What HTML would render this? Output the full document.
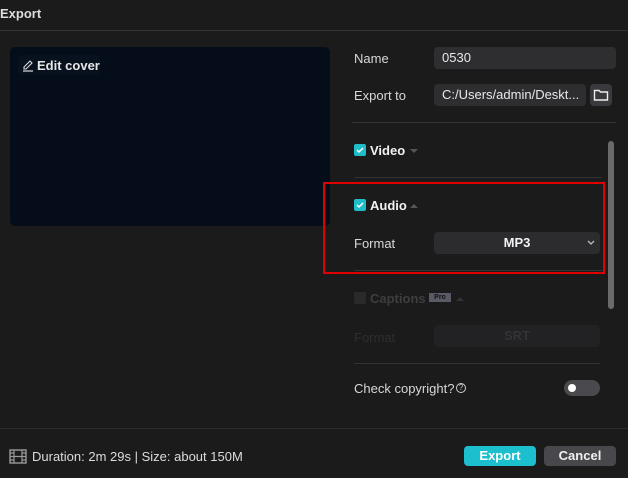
<!DOCTYPE html>
<html><head><style>
*{margin:0;padding:0;box-sizing:border-box}
body{width:628px;height:478px;background:#1b1b1b;font-family:"Liberation Sans",sans-serif;color:#e6e6e6;position:relative;overflow:hidden;font-size:13px}
.a{position:absolute}
.lbl{font-size:13px;color:#d8d8d8}
.inp{background:#2e2e31;border-radius:4px;height:22px;line-height:22px;padding-left:8px;color:#e8e8e8;font-size:13px}
.hr{height:1px;background:#333}
.cb{width:12px;height:12px;border-radius:2px;background:#1fbcca}
.b{font-weight:bold}
</style></head><body>
<div class="a b" style="left:0;top:6px;font-size:13px;color:#ddd">Export</div>
<div class="a" style="left:0;top:30px;width:628px;height:1px;background:#333"></div>
<div class="a" style="left:10px;top:47px;width:320px;height:179px;background:#050d1a;border-radius:5px"></div>
<div class="a" style="left:18px;top:55px;width:82px;height:20px;background:#08111e;border-radius:4px"></div>
<svg class="a" style="left:22px;top:58px" width="12" height="14" viewBox="0 0 12 14"><path d="M2 9 L8 3 L10 5 L4 11 L2 11 Z" fill="none" stroke="#ddd" stroke-width="1.1"/><path d="M1 13 H11" stroke="#ddd" stroke-width="1.2"/></svg>
<div class="a b" style="left:37px;top:58px;color:#e6e6e6">Edit cover</div>

<div class="a lbl" style="left:354px;top:51px">Name</div>
<div class="a inp" style="left:434px;top:47px;width:182px">0530</div>
<div class="a lbl" style="left:354px;top:88px">Export to</div>
<div class="a inp" style="left:434px;top:84px;width:152px">C:/Users/admin/Deskt...</div>
<div class="a" style="left:590px;top:84px;width:22px;height:22px;background:#3a3a3e;border-radius:4px"></div>
<svg class="a" style="left:593px;top:88px" width="16" height="14" viewBox="0 0 16 14"><path d="M1.5 2.5 H6 L7.5 4 H14.5 V12 H1.5 Z" fill="none" stroke="#eee" stroke-width="1.4"/></svg>
<div class="a hr" style="left:352px;top:122px;width:264px"></div>

<div class="a cb" style="left:354px;top:144px"></div>
<svg class="a" style="left:354px;top:144px" width="12" height="12"><path d="M3 6 L5 8 L9 4" stroke="#fff" stroke-width="1.5" fill="none"/></svg>
<div class="a b" style="left:370px;top:143px;color:#f2f2f2">Video</div>
<div class="a" style="left:410px;top:149px;border:4px solid transparent;border-top:4px solid #555"></div>
<div class="a hr" style="left:354px;top:177px;width:248px"></div>

<div class="a cb" style="left:354px;top:199px"></div>
<svg class="a" style="left:354px;top:199px" width="12" height="12"><path d="M3 6 L5 8 L9 4" stroke="#fff" stroke-width="1.5" fill="none"/></svg>
<div class="a b" style="left:370px;top:198px;color:#f2f2f2">Audio</div>
<div class="a" style="left:410px;top:200px;border:4px solid transparent;border-bottom:4px solid #555"></div>
<div class="a lbl" style="left:354px;top:236px">Format</div>
<div class="a" style="left:434px;top:232px;width:166px;height:22px;background:#2c2c2f;border-radius:4px;text-align:center;line-height:22px;font-weight:bold;color:#f2f2f2">MP3</div>
<svg class="a" style="left:587px;top:240px" width="8" height="6"><path d="M1 1 L4 4 L7 1" stroke="#bbb" stroke-width="1.3" fill="none"/></svg>
<div class="a hr" style="left:354px;top:270px;width:248px"></div>
<div class="a" style="left:323px;top:182px;width:282px;height:92px;border:2px solid #e00000"></div>

<div class="a" style="left:354px;top:292px;width:12px;height:12px;border-radius:2px;background:#2a2a2a"></div>
<div class="a b" style="left:370px;top:291px;color:#3e3e3e">Captions</div>
<div class="a" style="left:429px;top:293px;width:22px;height:9px;background:#5a5a66;font-size:7px;line-height:9px;text-align:center;color:#111;font-weight:bold">Pro</div>
<div class="a" style="left:456px;top:293px;border:4px solid transparent;border-bottom:4px solid #333"></div>
<div class="a" style="left:354px;top:330px;color:#2e2e2e">Format</div>
<div class="a" style="left:434px;top:325px;width:166px;height:22px;background:#222224;border-radius:4px;text-align:center;line-height:22px;font-weight:bold;color:#333">SRT</div>
<div class="a hr" style="left:354px;top:363px;width:246px"></div>

<div class="a lbl" style="left:354px;top:381px">Check copyright?</div>
<div class="a" style="left:456px;top:383px;width:10px;height:10px;border:1px solid #ccc;border-radius:50%;font-size:8px;line-height:8px;text-align:center;color:#ccc">?</div>
<div class="a" style="left:564px;top:380px;width:36px;height:16px;border-radius:8px;background:#4a4a4e"></div>
<div class="a" style="left:568px;top:384px;width:8px;height:8px;border-radius:50%;background:#fff"></div>

<div class="a" style="left:608px;top:141px;width:6px;height:168px;background:#6a6a6a;border-radius:3px"></div>

<div class="a" style="left:0;top:428px;width:628px;height:1px;background:#2b2b2b"></div>
<svg class="a" style="left:9px;top:449px" width="18" height="15" viewBox="0 0 18 15"><rect x="1" y="1" width="16" height="13" fill="none" stroke="#999" stroke-width="1.4"/><path d="M5 1 V14 M13 1 V14 M1 7.5 H17 M1 4 H5 M1 11 H5 M13 4 H17 M13 11 H17" stroke="#999" stroke-width="1.2"/></svg>
<div class="a" style="left:32px;top:449px;color:#dcdcdc">Duration: 2m 29s | Size: about 150M</div>
<div class="a b" style="left:464px;top:446px;width:72px;height:20px;background:#1bbfcd;border-radius:4px;text-align:center;line-height:20px;color:#fff">Export</div>
<div class="a b" style="left:544px;top:446px;width:72px;height:20px;background:#48484c;border-radius:4px;text-align:center;line-height:20px;color:#f0f0f0">Cancel</div>
</body></html>
